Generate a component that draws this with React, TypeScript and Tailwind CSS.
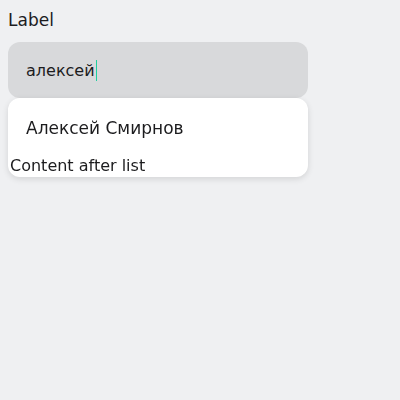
import { useEffect, useRef } from "react"

export default function App() {
  const inputRef = useRef<HTMLInputElement>(null)
  const value = "алексей"

  useEffect(() => {
    const el = inputRef.current
    if (el) {
      el.focus()
      el.setSelectionRange(el.value.length, el.value.length)
    }
  }, [])

  return (
    <div className="min-h-screen bg-[#eff0f2] p-2 font-['DejaVu_Sans',sans-serif] text-[#1c1c1e]">
      <label className="block text-[17px] leading-6 text-[#1c1c1e]">Label</label>

      {/* Combobox */}
      <div className="relative mt-[10px] w-[300px]">
        <input
          ref={inputRef}
          defaultValue={value}
          className="h-[56px] w-full rounded-[12px] bg-[#d8d9db] px-[18px] text-base text-[#1c1c1e] caret-transparent outline-none"
        />
        {/* caret */}
        <div className="pointer-events-none absolute inset-y-0 left-[18px] flex items-center text-base">
          <span className="invisible whitespace-pre">{value}</span>
          <span className="ml-[1px] h-[21px] w-px bg-[#1fcf9f]" />
        </div>
        <ul className="absolute left-0 top-full h-[79px] w-full rounded-[12px] bg-white shadow-[0_2px_6px_rgba(0,0,0,0.12)]">
          <li className="px-[18px] pt-[18px] text-[17px] leading-6">Алексей Смирнов</li>
        </ul>
      </div>

      <p className="relative mt-[56px] pl-[2px] text-base leading-6">Content after list</p>
    </div>
  )
}
